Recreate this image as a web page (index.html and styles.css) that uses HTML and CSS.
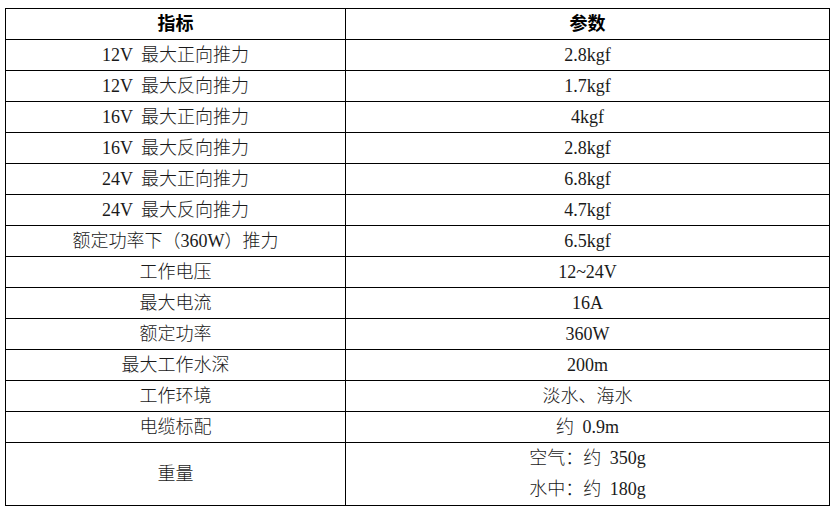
FILE: index.html
```html
<!DOCTYPE html>
<html lang="zh-CN">
<head>
<meta charset="utf-8">
<title>参数表</title>
<link rel="stylesheet" href="styles.css">
</head>
<body>
<table class="spec">
  <colgroup>
    <col class="col-name">
    <col class="col-value">
  </colgroup>
  <thead>
    <tr><th>指标</th><th>参数</th></tr>
  </thead>
  <tbody>
    <tr><td>12V 最大正向推力</td><td>2.8kgf</td></tr>
    <tr><td>12V 最大反向推力</td><td>1.7kgf</td></tr>
    <tr><td>16V 最大正向推力</td><td>4kgf</td></tr>
    <tr><td>16V 最大反向推力</td><td>2.8kgf</td></tr>
    <tr><td>24V 最大正向推力</td><td>6.8kgf</td></tr>
    <tr><td>24V 最大反向推力</td><td>4.7kgf</td></tr>
    <tr><td>额定功率下（360W）推力</td><td>6.5kgf</td></tr>
    <tr><td>工作电压</td><td>12~24V</td></tr>
    <tr><td>最大电流</td><td>16A</td></tr>
    <tr><td>额定功率</td><td>360W</td></tr>
    <tr><td>最大工作水深</td><td>200m</td></tr>
    <tr><td>工作环境</td><td>淡水、海水</td></tr>
    <tr><td>电缆标配</td><td>约 0.9m</td></tr>
    <tr class="tall"><td>重量</td><td><div class="line">空气：约 350g</div><div class="line">水中：约 180g</div></td></tr>
  </tbody>
</table>
</body>
</html>
```

FILE: styles.css
```css
html, body {
  margin: 0;
  padding: 0;
  background: #ffffff;
}

.spec {
  margin: 8px 0 0 5px;
  width: 824px;
  table-layout: fixed;
  border-collapse: collapse;
  border: 1px solid #000;
  font-family: "Liberation Serif", "Noto Sans CJK SC", serif;
  font-size: 18px;
  font-weight: 300;
  color: #1a1a1a;
  word-spacing: 4px;
}

.col-name { width: 340px; }
.col-value { width: 484px; }

.spec th,
.spec td {
  border: 1px solid #000;
  padding: 0;
  height: 30px;
  line-height: 30px;
  text-align: center;
  vertical-align: middle;
  white-space: nowrap;
}

.spec th {
  font-weight: 700;
  color: #000;
}

.spec .tall td {
  height: 61px;
}

.spec .line {
  line-height: 31px;
}
```
